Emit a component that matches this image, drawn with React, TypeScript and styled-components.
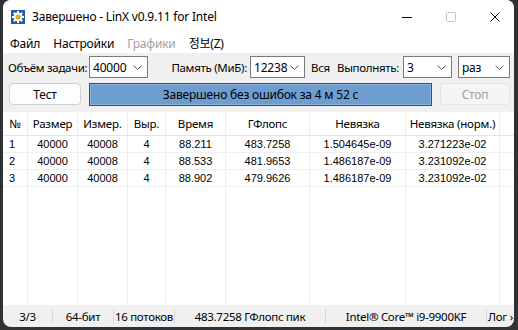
import styled, { createGlobalStyle } from "styled-components";

const GlobalStyle = createGlobalStyle`
  html, body {
    margin: 0;
    padding: 0;
  }
  body {
    width: 518px;
    height: 330px;
    overflow: hidden;
    background: #2f3133;
    font-family: "Noto Sans", "Noto Sans CJK KR", sans-serif;
    font-size: 12px;
    letter-spacing: -0.2px;
    color: #000;
  }
`;

const Window = styled.div`
  margin-left: 3px;
  width: 511px;
  height: 327px;
  background: #f0f0f0;
  border-radius: 8px;
  overflow: hidden;
  display: flex;
  flex-direction: column;
`;

const TitleBar = styled.div`
  flex: none;
  height: 33px;
  background: #fff;
  display: flex;
  align-items: center;
  padding: 0 14px 0 8px;
`;

const Title = styled.div`
  margin-left: 7px;
  flex: 1;
  white-space: nowrap;
`;

const WinControls = styled.div`
  display: flex;
  align-items: center;
  gap: 34px;
`;

const MenuBar = styled.div`
  flex: none;
  height: 20px;
  background: #fff;
  display: flex;
  align-items: center;
  gap: 13px;
  padding-left: 7px;
`;

const MenuItem = styled.span<{ $disabled?: boolean }>`
  color: ${(p) => (p.$disabled ? "#a0a0a0" : "#000")};
  white-space: nowrap;
`;

const Controls = styled.div`
  flex: none;
  display: flex;
  flex-direction: column;
  gap: 5px;
  padding: 3px 0 7px;
`;

const Row = styled.div<{ $indent?: number }>`
  display: flex;
  align-items: center;
  height: 22px;
  padding-left: ${(p) => p.$indent ?? 0}px;
`;

const Label = styled.span<{ $w: number; $right?: boolean; $pad?: number }>`
  width: ${(p) => p.$w}px;
  flex: none;
  box-sizing: border-box;
  text-align: ${(p) => (p.$right ? "right" : "left")};
  padding: ${(p) => (p.$right ? `0 ${p.$pad ?? 3}px 0 0` : `0 0 0 ${p.$pad ?? 0}px`)};
  font-size: 11.5px;
  letter-spacing: -0.3px;
  white-space: nowrap;
`;

const Combo = styled.div<{ $w: number }>`
  width: ${(p) => p.$w}px;
  height: 22px;
  flex: none;
  box-sizing: border-box;
  border: 1px solid #7a7a7a;
  background: #fff;
  display: flex;
  align-items: center;
  justify-content: space-between;
  padding: 0 5px 0 3px;
`;

const Button = styled.div<{ $w: number; $disabled?: boolean }>`
  width: ${(p) => p.$w}px;
  height: 22px;
  flex: none;
  box-sizing: border-box;
  border: 1px solid ${(p) => (p.$disabled ? "#e3e3e3" : "#d0d0d0")};
  border-radius: 4px;
  background: ${(p) => (p.$disabled ? "#f5f5f5" : "#fdfdfd")};
  color: ${(p) => (p.$disabled ? "#a0a0a0" : "#000")};
  display: flex;
  align-items: center;
  justify-content: center;
`;

const Progress = styled.div`
  width: 343px;
  height: 23px;
  flex: none;
  margin: 0 8px;
  box-sizing: border-box;
  border: 1px solid #3f4f63;
  box-shadow: inset 0 0 0 1px #89b2dc;
  background: #6e9ecf;
  display: flex;
  align-items: center;
  justify-content: center;
  white-space: nowrap;
`;

const Table = styled.div`
  flex: 1;
  background: #fff;
  display: grid;
  grid-template-columns: 25px 50px 50px 38px 60px 84px 96px 94px 1fr;
  grid-template-rows: 24px repeat(3, 17px) 1fr;
  font-family: "Liberation Sans", Arial, sans-serif;
  font-size: 11px;
  letter-spacing: 0;
`;

const Cell = styled.div<{ $head?: boolean; $left?: boolean; $filler?: boolean; $end?: boolean }>`
  display: flex;
  align-items: center;
  justify-content: ${(p) => (p.$left ? "flex-start" : "center")};
  padding-left: ${(p) => (p.$left ? "6px" : "0")};
  border-right: ${(p) => (p.$end ? "none" : "1px solid #ededed")};
  border-bottom: ${(p) =>
    p.$filler ? "none" : p.$head ? "1px solid #e5e5e5" : "1px solid #efefef"};
  font-family: ${(p) => (p.$head ? `"Noto Sans", sans-serif` : "inherit")};
  font-size: ${(p) => (p.$head ? "11.5px" : "11px")};
  letter-spacing: ${(p) => (p.$head ? "-0.2px" : "0")};
  white-space: nowrap;
  overflow: hidden;
`;

const StatusBar = styled.div`
  flex: none;
  height: 21px;
  display: flex;
  align-items: center;
  padding-top: 1px;
  font-size: 11.5px;
  letter-spacing: -0.3px;
`;

const StatusItem = styled.div<{ $w?: number; $first?: boolean }>`
  width: ${(p) => (p.$w ? `${p.$w}px` : "auto")};
  flex: ${(p) => (p.$w ? "none" : "1")};
  height: 15px;
  display: flex;
  align-items: center;
  justify-content: center;
  border-left: ${(p) => (p.$first ? "none" : "1px solid #d8d8d8")};
  white-space: nowrap;
`;

const Chevron = () => (
  <svg width="9" height="5" viewBox="0 0 9 5">
    <polyline points="0.5,0.5 4.5,4.5 8.5,0.5" fill="none" stroke="#606060" strokeWidth="1" />
  </svg>
);

const AppIcon = () => (
  <svg width="14" height="14" viewBox="0 0 14 14">
    <rect width="14" height="14" fill="#1d5fae" />
    <g fill="#fff">
      {[0, 45, 90, 135].map((a) => (
        <rect key={a} x="6" y="1" width="2" height="12" transform={`rotate(${a} 7 7)`} />
      ))}
      <circle cx="7" cy="7" r="4.4" />
    </g>
    <circle cx="7" cy="7" r="2.6" fill="#f0a81c" />
    <circle cx="7.6" cy="6.4" r="1.1" fill="#8cc653" />
  </svg>
);

const columns = ["№", "Размер", "Измер.", "Выр.", "Время", "ГФлопс", "Невязка", "Невязка (норм.)"];

const rows = [
  ["1", "40000", "40008", "4", "88.211", "483.7258", "1.504645e-09", "3.271223e-02"],
  ["2", "40000", "40008", "4", "88.533", "481.9653", "1.486187e-09", "3.231092e-02"],
  ["3", "40000", "40008", "4", "88.902", "479.9626", "1.486187e-09", "3.231092e-02"],
];

const status = [
  { w: 49, text: "3/3" },
  { w: 60, text: "64-бит" },
  { w: 60, text: "16 потоков" },
  { w: 150, text: "483.7258 ГФлопс пик" },
  { w: 160, text: "Intel® Core™ i9-9900KF" },
  { w: 0, text: "Лог ›" },
];

export default function App() {
  return (
    <>
      <GlobalStyle />
      <Window>
        <TitleBar>
          <AppIcon />
          <Title>Завершено - LinX v0.9.11 for Intel</Title>
          <WinControls>
            <svg width="10" height="10" viewBox="0 0 10 10">
              <line x1="0" y1="5.5" x2="10" y2="5.5" stroke="#000" strokeWidth="1" />
            </svg>
            <svg width="10" height="10" viewBox="0 0 10 10">
              <rect x="0.5" y="0.5" width="9" height="9" rx="1" fill="none" stroke="#c4c4c4" />
            </svg>
            <svg width="10" height="10" viewBox="0 0 10 10">
              <path d="M0.5 0.5 L9.5 9.5 M9.5 0.5 L0.5 9.5" stroke="#000" strokeWidth="1" />
            </svg>
          </WinControls>
        </TitleBar>
        <MenuBar>
          <MenuItem>Файл</MenuItem>
          <MenuItem>Настройки</MenuItem>
          <MenuItem $disabled>Графики</MenuItem>
          <MenuItem>정보(Z)</MenuItem>
        </MenuBar>
        <Controls>
          <Row>
            <Label $w={86} $pad={5}>Объём задачи:</Label>
            <Combo $w={59}>
              40000
              <Chevron />
            </Combo>
            <Label $w={102} $right>Память (МиБ):</Label>
            <Combo $w={55}>
              12238
              <Chevron />
            </Combo>
            <Label $w={30} $pad={6}>Вся</Label>
            <Label $w={68} $right $pad={4}>Выполнять:</Label>
            <Combo $w={49}>
              3
              <Chevron />
            </Combo>
            <Label $w={6} />
            <Combo $w={52}>
              раз
              <Chevron />
            </Combo>
          </Row>
          <Row $indent={6}>
            <Button $w={72}>Тест</Button>
            <Progress>Завершено без ошибок за 4 м 52 с</Progress>
            <Button $w={70} $disabled>
              Стоп
            </Button>
          </Row>
        </Controls>
        <Table>
          {columns.map((c) => (
            <Cell key={c} $head>
              {c}
            </Cell>
          ))}
          <Cell $head $end />
          {rows.map((r) => (
            <>
              {r.map((v, i) => (
                <Cell key={r[0] + i} $left={i === 0}>
                  {v}
                </Cell>
              ))}
              <Cell $end />
            </>
          ))}
          {columns.map((c) => (
            <Cell key={"f" + c} $filler />
          ))}
          <Cell $filler $end />
        </Table>
        <StatusBar>
          {status.map((s, i) => (
            <StatusItem key={s.text} $w={s.w || undefined} $first={i === 0}>
              {s.text}
            </StatusItem>
          ))}
        </StatusBar>
      </Window>
    </>
  );
}
